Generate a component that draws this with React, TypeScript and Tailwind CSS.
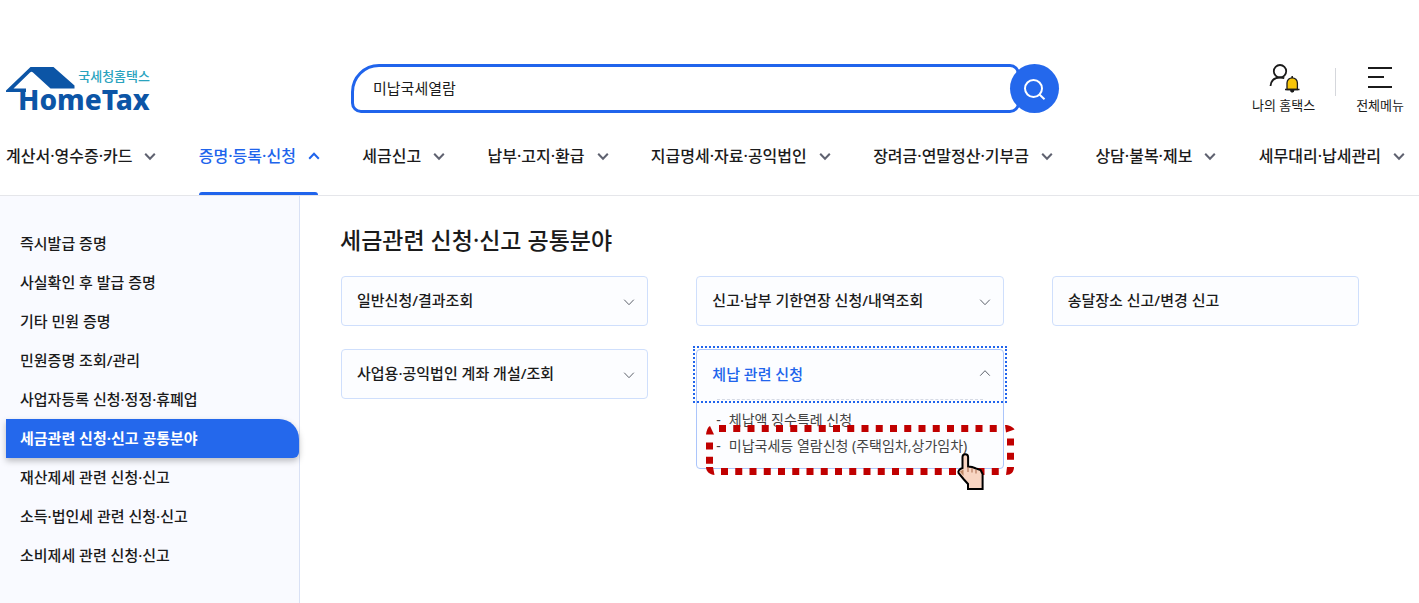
import React from "react";

type NavItem = { label: string; active?: boolean };

const NAV: NavItem[] = [
  { label: "계산서·영수증·카드" },
  { label: "증명·등록·신청", active: true },
  { label: "세금신고" },
  { label: "납부·고지·환급" },
  { label: "지급명세·자료·공익법인" },
  { label: "장려금·연말정산·기부금" },
  { label: "상담·불복·제보" },
  { label: "세무대리·납세관리" },
];

const SIDE: NavItem[] = [
  { label: "즉시발급 증명" },
  { label: "사실확인 후 발급 증명" },
  { label: "기타 민원 증명" },
  { label: "민원증명 조회/관리" },
  { label: "사업자등록 신청·정정·휴폐업" },
  { label: "세금관련 신청·신고 공통분야", active: true },
  { label: "재산제세 관련 신청·신고" },
  { label: "소득·법인세 관련 신청·신고" },
  { label: "소비제세 관련 신청·신고" },
];

function Chevron({ up = false, className = "" }: { up?: boolean; className?: string }) {
  return (
    <svg viewBox="0 0 12 12" className={className} fill="none" stroke="currentColor" aria-hidden="true">
      <path d={up ? "M1.2 8.7 6 3.700 10.800 8.700" : "M1.200 3.700 6 8.700 10.800 3.700"} />
    </svg>
  );
}

function Logo() {
  return (
    <a href="#home" aria-label="국세청홈택스 HomeTax" className="block w-[146px]">
      <div className="grid h-[49px]">
        <svg viewBox="0 0 146 49" className="col-start-1 row-start-1 h-[49px] w-[146px]" aria-hidden="true">
          <path
            d="M0 26.500 24.500 3H47.500L68.500 21.500V24.500H44.500L27 8.500Q25.500 7 24 8.500L7.500 24.500H20V28H0Z"
            fill="#0c55a6"
          />
        </svg>
        <span className="col-start-1 row-start-1 mt-1 mr-0.5 justify-self-end text-[13px] leading-4 font-medium text-[#2aa3be]">
          국세청홈택스
        </span>
        <span className="col-start-1 row-start-1 ml-3 self-end text-[28px] leading-7 font-extrabold text-[#0c55a6]">
          HomeTax
        </span>
      </div>
    </a>
  );
}

function Card({ label, arrow = true }: { label: string; arrow?: boolean }) {
  return (
    <button
      type="button"
      className="flex h-[50px] items-center justify-between rounded border border-[#cfdffc] bg-[#fcfdff] pr-3 pl-[15px] text-left text-[15px] leading-5 font-medium"
    >
      <span className="pb-0.5">{label}</span>
      {arrow && <Chevron className="mt-0.5 size-3 text-[#5d626b]" />}
    </button>
  );
}

function ClickGuide() {
  return (
    <svg
      viewBox="0 0 310 66"
      className="pointer-events-none absolute top-[75px] left-[9px] h-[66px] w-[310px]"
      fill="none"
      aria-hidden="true"
    >
      <g stroke="#c00000" strokeWidth="7">
        <path d="M13 3.500H292" strokeDasharray="7 7.250" />
        <path d="M15 46.500H294" strokeDasharray="7 7.250" />
        <path d="M3.500 17.500V39" strokeDasharray="7 7.300" />
        <path d="M304.500 13.500V36" strokeDasharray="7 7.300" />
      </g>
      <g fill="#c00000">
        <path d="M0 9.500C.5 5 2 2 4 1L8 9.500Z" />
        <path d="M299 0C303 0 307 2 308.500 4.500L300 7.500Z" />
        <path d="M0 42H7L8.500 50C4 49.500 0 47 0 42Z" />
        <path d="M301 42H308C308 47 305 50 300 50Z" />
      </g>
      <path
        d="M256.500 32a2.800 2.800 0 0 1 5.600 0v9.500l4 .5 4 1.500 4.500 1.500 2 4V64H262v-5l-4.500-5-5-6c-.8-2 1-4 4-5Z"
        fill="#f8d5c2"
        stroke="#000"
        strokeWidth="2"
      />
      <path d="M254 46.500 257.500 44.500V51Z" fill="#c08a66" />
      <path d="M262 42v5M266 43v4.500M270 44.500v4" stroke="#a8694a" strokeWidth="1" />
    </svg>
  );
}

export default function App() {
  return (
    <div className="flex min-h-screen flex-col bg-white font-['Noto_Sans','Noto_Sans_CJK_KR',sans-serif] text-[#1b1b1b]">
      <header className="border-b border-[#e5e6ea] pt-16">
        <div className="grid grid-cols-[1fr_708px_1fr] items-start pr-[15px] pl-1.5">
          <Logo />
          <form className="flex h-[49px]" onSubmit={(e) => e.preventDefault()}>
            <input
              type="text"
              aria-label="검색어"
              defaultValue="미납국세열람"
              className="min-w-0 flex-1 rounded-[10px] rounded-tl-[28px] border-3 border-[#2064ec] bg-white px-[19px] text-[15px] outline-none"
            />
            <button
              type="submit"
              aria-label="검색"
              className="z-10 -ml-2.5 flex size-[49px] items-center justify-center rounded-full bg-[#2468ec] text-white"
            >
              <svg viewBox="0 0 24 24" className="size-6" fill="none" stroke="currentColor" strokeWidth="2" aria-hidden="true">
                <circle cx="10.500" cy="11.500" r="8.500" />
                <path d="m16.700 17.700 4.800 4.500" />
              </svg>
            </button>
          </form>
          <div className="flex items-start justify-end text-[13px] leading-4">
            <a href="#my" className="flex flex-col items-center gap-1">
              <svg viewBox="0 0 32 29" className="h-[29px] w-8" fill="none" stroke="#1b1b1b" strokeWidth="1.8" aria-hidden="true">
                <circle cx="12" cy="7.200" r="6.200" />
                <path d="M2.500 22c.5-5.500 4-8.500 9.500-8.500 2 0 3 .2 4.300.8" />
                <path d="M19 25.500V19a5.200 5.200 0 0 1 10.400 0v6.500Z" fill="#f8c60a" strokeWidth="1.300" />
                <path d="M17 25.500h14.500M24.200 12v2" strokeWidth="1.500" />
                <path d="M22.500 26.500h3.500l-.8 1.500h-2Z" fill="#1b1b1b" strokeWidth="1" />
              </svg>
              나의 홈택스
            </a>
            <span className="mx-5 mt-1 h-7 w-px bg-[#d5d7dc]" />
            <a href="#menu" className="flex flex-col items-center gap-1">
              <svg viewBox="0 0 24 29" className="h-[29px] w-6" fill="none" stroke="#1b1b1b" strokeWidth="2" aria-hidden="true">
                <path d="M0 4h24M0 13h16M0 23h24" />
              </svg>
              전체메뉴
            </a>
          </div>
        </div>
        <nav aria-label="주메뉴" className="mt-[19px] flex justify-between pr-3.5 pl-1.5">
          {NAV.map((n) => (
            <a
              key={n.label}
              href="#nav"
              className={
                n.active
                  ? "relative flex h-[63px] gap-3 pt-3 text-[16px] leading-6 font-medium text-[#2064ec]"
                  : "relative flex h-[63px] gap-3 pt-3 text-[16px] leading-6 font-medium"
              }
            >
              <span>{n.label}</span>
              <Chevron
                up={n.active}
                className={n.active ? "mt-1.5 size-3 stroke-2" : "mt-1.5 size-3 stroke-2 text-[#5f6270]"}
              />
              {n.active && <span className="absolute right-0.5 bottom-0 left-0 h-[3px] rounded-t-sm bg-[#2064ec]" />}
            </a>
          ))}
        </nav>
      </header>

      <div className="flex flex-1">
        <aside className="w-[300px] shrink-0 border-r border-[#d9e1f5] bg-[#f9faff] pt-7 pl-1.5">
          <ul>
            {SIDE.map((s) => (
              <li key={s.label}>
                <a
                  href="#side"
                  className={
                    s.active
                      ? "flex h-[39px] items-center rounded-tr-[20px] rounded-br-md bg-[#2468ec] pb-0.5 pl-3.5 text-[15px] leading-5 font-bold text-white shadow-[0_3px_6px_rgba(0,0,0,0.25)]"
                      : "flex h-[39px] items-center pb-0.5 pl-3.5 text-[15px] leading-5 font-medium"
                  }
                >
                  {s.label}
                </a>
              </li>
            ))}
          </ul>
        </aside>

        <main className="flex-1 pt-7 pr-[60px] pl-10">
          <h1 className="text-[23px] leading-8 font-medium">세금관련 신청·신고 공통분야</h1>
          <div className="mt-5 grid grid-cols-3 items-start gap-x-12 gap-y-[23px] pl-px">
            <Card label="일반신청/결과조회" />
            <Card label="신고·납부 기한연장 신청/내역조회" />
            <Card label="송달장소 신고/변경 신고" arrow={false} />
            <Card label="사업용·공익법인 계좌 개설/조회" />
            <section className="relative h-[120px] rounded border border-[#abc5fb] bg-[#fcfdff]">
              <button
                type="button"
                aria-expanded="true"
                className="flex h-[49px] w-full items-center justify-between pr-3 pl-[15px] text-left text-[15px] leading-5 font-medium text-[#2064ec] outline-2 outline-offset-2 outline-[#2064ec] outline-dotted"
              >
                <span className="pb-0.5">체납 관련 신청</span>
                <Chevron up className="mb-1 size-3 text-[#5d626b]" />
              </button>
              <div className="mx-5 border-t border-dashed border-[#d5dae5]" />
              <ul className="pt-[7px] pl-[19px] text-[14px] leading-[26px] text-[#444]">
                <li className="flex gap-2">
                  <span>-</span>
                  <a href="#special">체납액 징수특례 신청</a>
                </li>
                <li className="flex gap-2">
                  <span>-</span>
                  <a href="#unpaid">미납국세등 열람신청 (주택임차,상가임차)</a>
                </li>
              </ul>
              <ClickGuide />
            </section>
          </div>
        </main>
      </div>
    </div>
  );
}
